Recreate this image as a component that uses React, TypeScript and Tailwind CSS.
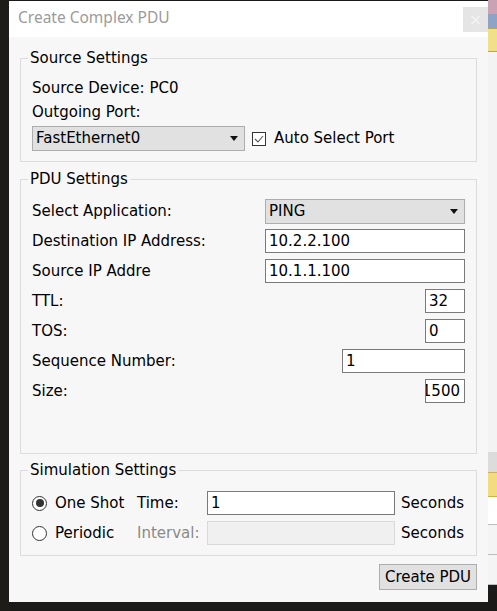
import React from "react";

const font = { fontFamily: '"DejaVu Sans", Verdana, sans-serif' };

function Field({
  value,
  width,
  clipRight,
}: {
  value: string;
  width: string;
  clipRight?: boolean;
}) {
  return (
    <div
      className={`${width} h-[24px] border border-[#7a7a7a] bg-white flex items-center overflow-hidden whitespace-nowrap ${
        clipRight ? "justify-end pr-[4px]" : "pl-[3px]"
      }`}
    >
      {value}
    </div>
  );
}

function Combo({ value, width }: { value: string; width: string }) {
  return (
    <div
      className={`${width} h-[25px] border border-[#adadad] bg-[#e1e1e1] flex items-center justify-between pl-[3px] pr-[6px]`}
    >
      <span>{value}</span>
      <svg width="8" height="5" viewBox="0 0 8 5">
        <path d="M0 0 L8 0 L4 5 Z" fill="#111" />
      </svg>
    </div>
  );
}

function Group({
  title,
  height,
  children,
}: {
  title: string;
  height: string;
  children: React.ReactNode;
}) {
  return (
    <div className={`border border-[#dcdcdc] ${height}`}>
      <div className="-mt-[10px] ml-[7px] px-[2px] w-fit bg-[#f7f7f7] leading-[18px]">
        {title}
      </div>
      <div className="px-[11px]">{children}</div>
    </div>
  );
}

function Radio({ checked }: { checked?: boolean }) {
  return (
    <div className="w-[15px] h-[15px] rounded-full border border-[#333] bg-white flex items-center justify-center">
      {checked && <div className="w-[8px] h-[8px] rounded-full bg-[#333]" />}
    </div>
  );
}

function Row({
  label,
  children,
}: {
  label: string;
  children: React.ReactNode;
}) {
  return (
    <div className="h-[24px] flex items-center justify-between">
      <span>{label}</span>
      {children}
    </div>
  );
}

export default function App() {
  return (
    <div className="w-[497px] h-[611px] bg-[#1c1a18] flex overflow-hidden">
      {/* left backdrop */}
      <div className="w-[9px] bg-[#1e1c19]" />

      {/* ------------------ DIALOG ------------------ */}
      <div
        className="w-[479px] mt-[1px] h-[601px] flex flex-col text-[15px] text-black"
        style={font}
      >
        {/* title bar */}
        <div className="h-[36px] bg-white flex items-center justify-between pl-[9px]">
          <span
            className="text-[15.5px] text-[#9b9b9b] -mt-[2px]"
            style={{ fontFamily: '"Noto Sans", "Open Sans", sans-serif' }}
          >
            Create Complex PDU
          </span>
          <div className="w-[25px] h-[25px] mt-[1px] bg-[#e5e5e5] flex items-center justify-center text-[#f4f4f4] text-[16px] leading-none">
            ×
          </div>
        </div>

        {/* body */}
        <div className="flex-1 bg-[#f7f7f7] px-[11px] pt-[21px]">
          <Group title="Source Settings" height="h-[104px]">
            <div className="mt-[9px] h-[24px] flex items-center">
              Source Device: PC0
            </div>
            <div className="h-[25px] flex items-center">Outgoing Port:</div>
            <div className="mt-[1px] h-[25px] flex items-center">
              <Combo value="FastEthernet0" width="w-[213px]" />
              <div className="ml-[7px] w-[14px] h-[14px] border border-[#333] bg-white flex items-center justify-center">
                <svg width="10" height="8" viewBox="0 0 10 8">
                  <path
                    d="M1 4 L4 7 L9 1"
                    fill="none"
                    stroke="#555"
                    strokeWidth="1.1"
                  />
                </svg>
              </div>
              <span className="ml-[8px]">Auto Select Port</span>
            </div>
          </Group>

          <div className="mt-[17px]">
            <Group title="PDU Settings" height="h-[275px]">
              <div className="mt-[11px] flex flex-col gap-[6px]">
                <Row label="Select Application:">
                  <Combo value="PING" width="w-[200px]" />
                </Row>
                <Row label="Destination IP Address:">
                  <Field value="10.2.2.100" width="w-[200px]" />
                </Row>
                <Row label="Source IP Addre">
                  <Field value="10.1.1.100" width="w-[200px]" />
                </Row>
                <Row label="TTL:">
                  <Field value="32" width="w-[40px]" />
                </Row>
                <Row label="TOS:">
                  <Field value="0" width="w-[40px]" />
                </Row>
                <Row label="Sequence Number:">
                  <Field value="1" width="w-[123px]" />
                </Row>
                <Row label="Size:">
                  <Field value="1500" width="w-[40px]" clipRight />
                </Row>
              </div>
            </Group>
          </div>

          <div className="mt-[16px]">
            <Group title="Simulation Settings" height="h-[86px]">
              <div className="mt-[12px] flex flex-col gap-[6px]">
                <div className="h-[24px] flex items-center">
                  <Radio checked />
                  <span className="ml-[8px] w-[82px]">One Shot</span>
                  <span className="w-[70px]">Time:</span>
                  <Field value="1" width="w-[188px]" />
                  <span className="ml-[6px]">Seconds</span>
                </div>
                <div className="h-[24px] flex items-center">
                  <Radio />
                  <span className="ml-[8px] w-[82px]">Periodic</span>
                  <span className="w-[70px] text-[#8a8a8a]">Interval:</span>
                  <div className="w-[188px] h-[24px] border border-[#d9d9d9] bg-[#f0f0f0]" />
                  <span className="ml-[6px]">Seconds</span>
                </div>
              </div>
            </Group>
          </div>

          <div className="mt-[8px] flex justify-end">
            <button className="w-[98px] h-[26px] border border-[#adadad] bg-[#e1e1e1] flex items-center justify-center">
              Create PDU
            </button>
          </div>
        </div>
      </div>

      {/* right backdrop: app behind the dialog */}
      <div className="w-[9px] flex flex-col bg-[#e9e9e9] shadow-[inset_3px_0_3px_rgba(0,0,0,0.15)]">
        <div className="h-[14px] bg-[#c9a2b4]" />
        <div className="h-[14px] bg-[#8fa4c4]" />
        <div className="h-[24px] bg-[#f0e08a] border-y border-[#b8a84a]" />
        <div className="h-[400px] bg-[#f3f3f3]" />
        <div className="h-[20px] bg-[#dcdcdc]" />
        <div className="h-[25px] bg-[#f3dc7f] border-y border-[#c9b25a]" />
        <div className="h-[28px] bg-white border-b border-[#bdbdbd]" />
        <div className="h-[30px] bg-[#f4f4f4] border-b border-[#bdbdbd]" />
        <div className="h-[30px] bg-[#f4f4f4] border-b border-[#bdbdbd]" />
        <div className="flex-1 bg-[#1c1a18]" />
      </div>
    </div>
  );
}
